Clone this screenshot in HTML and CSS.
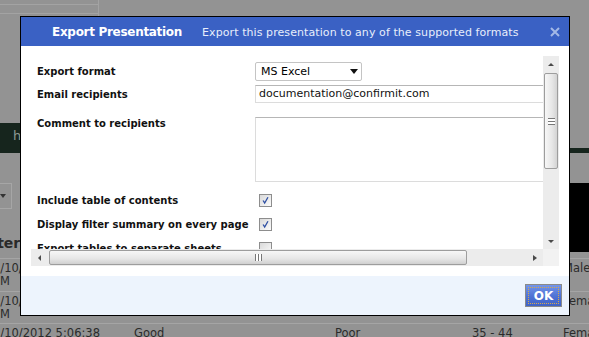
FILE: index.html
```html
<!DOCTYPE html>
<html>

<head>
  <meta charset="utf-8">
  <link rel="stylesheet" href="styles.css">
</head>

<body>
  <div class="app">
    <div class="tabs">
      <div class="tab"><div class="tab-line"></div></div>
    </div>
    <div class="nav"><div class="brand">hub</div></div>
    <div class="upper">
      <div class="upper-main">
        <div class="toolbar"><div class="picker"><span class="picker-arrow"></span></div></div>
        <div class="grid-head">Filter</div>
      </div>
      <div class="chart"></div>
    </div>
    <div class="grid-row r1">
      <div class="cell c1">3/10/2012 5:06:38<br>PM</div>
      <div class="cell c2">Excellent</div>
      <div class="cell c3">Good</div>
      <div class="cell c4">25 - 34</div>
      <div class="cell c5">Male</div>
    </div>
    <div class="grid-row r2">
      <div class="cell c1">3/10/2012 5:06:38<br>PM</div>
      <div class="cell c2">Fair</div>
      <div class="cell c3">Fair</div>
      <div class="cell c4">45 - 54</div>
      <div class="cell c5">Female</div>
    </div>
    <div class="grid-row r3">
      <div class="cell c1">3/10/2012 5:06:38<br>PM</div>
      <div class="cell c2">Good</div>
      <div class="cell c3">Poor</div>
      <div class="cell c4">35 - 44</div>
      <div class="cell c5">Female</div>
    </div>
  </div>

  <div class="dialog">
    <div class="dialog-header">
      <span class="dialog-title">Export Presentation</span>
      <span class="dialog-subtitle">Export this presentation to any of the supported formats</span>
      <span class="dialog-close">
        <svg width="10" height="10" viewBox="0 0 10 10"><path d="M1 1 L9 9 M9 1 L1 9" /></svg>
      </span>
    </div>

    <div class="dialog-body">
      <div class="scroll-box">
        <div class="scroll-view">
          <div class="form">
            <div class="form-row row-format">
              <label>Export format</label>
              <div class="select">MS Excel<span class="caret"></span></div>
            </div>
            <div class="form-row row-email">
              <label>Email recipients</label>
              <div class="input">documentation@confirmit.com</div>
            </div>
            <div class="form-row row-comment">
              <label>Comment to recipients</label>
              <div class="textarea"></div>
            </div>
            <div class="form-row row-check">
              <label>Include table of contents</label>
              <span class="check"><svg viewBox="0 0 11 11"><path d="M2.5 5.5 L4.5 8.5 L8.5 1.5" /></svg></span>
            </div>
            <div class="form-row row-check">
              <label>Display filter summary on every page</label>
              <span class="check"><svg viewBox="0 0 11 11"><path d="M2.5 5.5 L4.5 8.5 L8.5 1.5" /></svg></span>
            </div>
            <div class="form-row row-check">
              <label>Export tables to separate sheets</label>
              <span class="check"></span>
            </div>
          </div>
        </div>

        <div class="vscroll">
          <div class="sb-btn"><span class="arrow-up"></span></div>
          <div class="vthumb"><span class="vgrip"></span></div>
          <div class="sb-fill"></div>
          <div class="sb-btn"><span class="arrow-down"></span></div>
        </div>

        <div class="hscroll">
          <div class="sb-btn-h"><span class="arrow-left"></span></div>
          <div class="hthumb"><span class="hgrip"></span></div>
          <div class="sb-fill"></div>
          <div class="sb-btn-h"><span class="arrow-right"></span></div>
        </div>

        <div class="corner"></div>
      </div>
    </div>

    <div class="dialog-footer">
      <button class="ok"><span>OK</span></button>
    </div>
  </div>
</body>

</html>
```

FILE: styles.css
```css
* {
  box-sizing: border-box;
}

body {
  margin: 0;
  width: 589px;
  height: 337px;
  overflow: hidden;
  position: relative;
  background: #939393;
  font-family: "DejaVu Sans", Verdana, sans-serif;
}

/* greyed application behind the modal */

.app {
  display: flex;
  flex-direction: column;
  height: 337px;
  overflow: hidden;
  color: #2b2b2b;
  font-size: 11.5px;
}

.app > div {
  flex-shrink: 0;
}

.tabs {
  height: 123px;
}

.tab {
  width: 99px;
  height: 16px;
  padding-top: 4px;
  border-right: 1px solid #a3a3a3;
}

.tab-line {
  height: 10px;
  border-top: 1px solid #a3a3a3;
  border-bottom: 1px solid #a3a3a3;
}

.nav {
  height: 30px;
  margin-bottom: 30px;
  border-bottom: 5px solid #16251d;
}

.brand {
  width: 120px;
  height: 25px;
  line-height: 25px;
  padding-left: 13px;
  background: #16251d;
  color: #8e9a94;
  font-size: 13px;
}

.upper {
  display: flex;
  height: 75px;
}

.upper-main {
  flex: 1;
}

.toolbar {
  height: 26px;
}

.picker {
  display: flex;
  align-items: center;
  justify-content: flex-end;
  width: 20px;
  height: 26px;
  margin-left: -8px;
  padding-right: 5px;
  border: 1px solid #a6a6a6;
}

.picker-arrow {
  border-left: 3px solid transparent;
  border-right: 3px solid transparent;
  border-top: 4px solid #333;
}

.grid-head {
  height: 49px;
  padding-top: 26px;
  margin-left: -22px;
  line-height: 16px;
  font-size: 14px;
  font-weight: bold;
  color: #2a2a2a;
}

.chart {
  width: 100px;
  height: 69px;
  background: #000;
}

.grid-row {
  display: flex;
  border-top: 1px solid #a5a5a5;
  line-height: 13px;
}

.r1 {
  height: 33px;
}

.r2 {
  height: 32px;
}

.r3 {
  height: 30px;
}

.cell {
  flex-shrink: 0;
  padding-top: 3px;
  white-space: nowrap;
}

.c1 {
  width: 141px;
  margin-left: -7px;
}

.c2 {
  width: 201px;
}

.c3 {
  width: 137px;
}

.c4 {
  width: 91px;
}

.c5 {
  flex: 1;
}

/* modal */

.dialog {
  position: absolute;
  left: 20px;
  top: 16px;
  width: 550px;
  height: 300px;
  display: flex;
  flex-direction: column;
  border: 1px solid #000;
  background: #fff;
}

.dialog-header {
  display: flex;
  align-items: center;
  height: 29px;
  padding-left: 31px;
  padding-right: 9px;
  background: #3a61c4;
  color: #fff;
}

.dialog-title {
  font-size: 12px;
  font-weight: bold;
  letter-spacing: -0.3px;
}

.dialog-subtitle {
  margin-left: 20px;
  padding-top: 1px;
  font-size: 11px;
  letter-spacing: 0.08px;
  color: #e8eefb;
}

.dialog-close {
  display: flex;
  margin-left: auto;
}

.dialog-close path {
  stroke: #a3b8e6;
  stroke-width: 2;
  fill: none;
}

.dialog-body {
  height: 230px;
  padding: 10px;
}

.scroll-box {
  display: grid;
  grid-template-columns: 512px 16px;
  grid-template-rows: 193px 17px;
  width: 528px;
  height: 210px;
}

.scroll-view {
  overflow: hidden;
}

.form {
  width: 700px;
  padding: 6px 0 0 6px;
  font-size: 10px;
}

.form-row {
  display: flex;
  align-items: center;
}

.form-row label {
  width: 218px;
  flex-shrink: 0;
  font-weight: bold;
  color: #111;
}

.row-format {
  height: 19px;
}

.row-email {
  height: 18px;
  margin-top: 4px;
}

.row-comment {
  align-items: flex-start;
  height: 65px;
  margin-top: 14px;
}

.row-comment label {
  padding-top: 1px;
}

.row-check {
  height: 13px;
  margin-top: 11px;
}

.row-comment + .row-check {
  margin-top: 12px;
}

.select {
  display: flex;
  align-items: center;
  width: 107px;
  height: 19px;
  padding: 0 3px 0 5px;
  border: 1px solid #c4c4c4;
  border-radius: 2px;
  font-size: 11px;
  color: #000;
}

.caret {
  margin-left: auto;
  border-left: 4px solid transparent;
  border-right: 4px solid transparent;
  border-top: 5px solid #111;
}

.input {
  width: 400px;
  height: 18px;
  padding-left: 3px;
  line-height: 16px;
  border: 1px solid #dcdcdc;
  border-top-color: #b6b6b6;
  font-size: 11px;
  color: #111;
}

.textarea {
  width: 400px;
  height: 65px;
  border: 1px solid #dcdcdc;
  border-top-color: #b6b6b6;
}

.check {
  display: flex;
  width: 13px;
  height: 13px;
  margin-left: 4px;
  padding: 1px;
  border: 1px solid #8d8d8d;
  background: linear-gradient(135deg, #d9d9d9, #fbfbfb);
}

.check svg {
  width: 9px;
  height: 9px;
}

.check path {
  stroke: #2e4fa3;
  stroke-width: 1.6;
  fill: none;
}

/* scrollbars */

.vscroll {
  display: flex;
  flex-direction: column;
  background: #ececec;
}

.sb-btn {
  display: flex;
  align-items: center;
  justify-content: center;
  height: 16px;
  flex-shrink: 0;
}

.sb-fill {
  flex: 1;
}

.arrow-up {
  border-left: 3px solid transparent;
  border-right: 3px solid transparent;
  border-bottom: 3px solid #4a4a4a;
}

.arrow-down {
  border-left: 3px solid transparent;
  border-right: 3px solid transparent;
  border-top: 3px solid #4a4a4a;
}

.vthumb {
  display: flex;
  align-items: center;
  justify-content: center;
  height: 96px;
  margin: 1px 1px 0 1px;
  border: 1px solid #9d9d9d;
  border-radius: 2px;
  background: linear-gradient(90deg, #f7f7f7, #e6e6e6 60%, #d3d3d3);
}

.vgrip {
  width: 7px;
  height: 7px;
  border-top: 1px solid #777;
  border-bottom: 1px solid #777;
  background: linear-gradient(#fff 0 2px, #777 2px 3px, #fff 3px);
}

.hscroll {
  display: flex;
  background: #ececec;
}

.sb-btn-h {
  display: flex;
  align-items: center;
  justify-content: center;
  width: 16px;
  flex-shrink: 0;
}

.arrow-left {
  border-top: 3px solid transparent;
  border-bottom: 3px solid transparent;
  border-right: 3px solid #4a4a4a;
}

.arrow-right {
  border-top: 3px solid transparent;
  border-bottom: 3px solid transparent;
  border-left: 4px solid #4a4a4a;
}

.hthumb {
  display: flex;
  align-items: center;
  justify-content: center;
  width: 418px;
  margin: 1px 0 1px 2px;
  border: 1px solid #9d9d9d;
  border-radius: 2px;
  background: linear-gradient(#f7f7f7, #e6e6e6 60%, #d0d0d0);
}

.hgrip {
  width: 7px;
  height: 7px;
  border-left: 1px solid #777;
  border-right: 1px solid #777;
  background: linear-gradient(90deg, #fff 0 2px, #777 2px 3px, #fff 3px);
}

.corner {
  background: #f2f2f2;
}

.dialog-footer {
  display: flex;
  justify-content: flex-end;
  flex: 1;
  padding: 8px 7px 0 0;
  background: #edf4fd;
}

.ok {
  width: 37px;
  height: 23px;
  padding: 2px;
  border: 1px solid #8a8a8a;
  background: linear-gradient(#7395ea, #4e72d4 55%, #3f63c6);
  font-family: "DejaVu Sans", Verdana, sans-serif;
  font-size: 12px;
  font-weight: bold;
  color: #fff;
}

.ok span {
  display: flex;
  align-items: center;
  justify-content: center;
  height: 100%;
  border: 1px dotted #d9a84e;
}
```
